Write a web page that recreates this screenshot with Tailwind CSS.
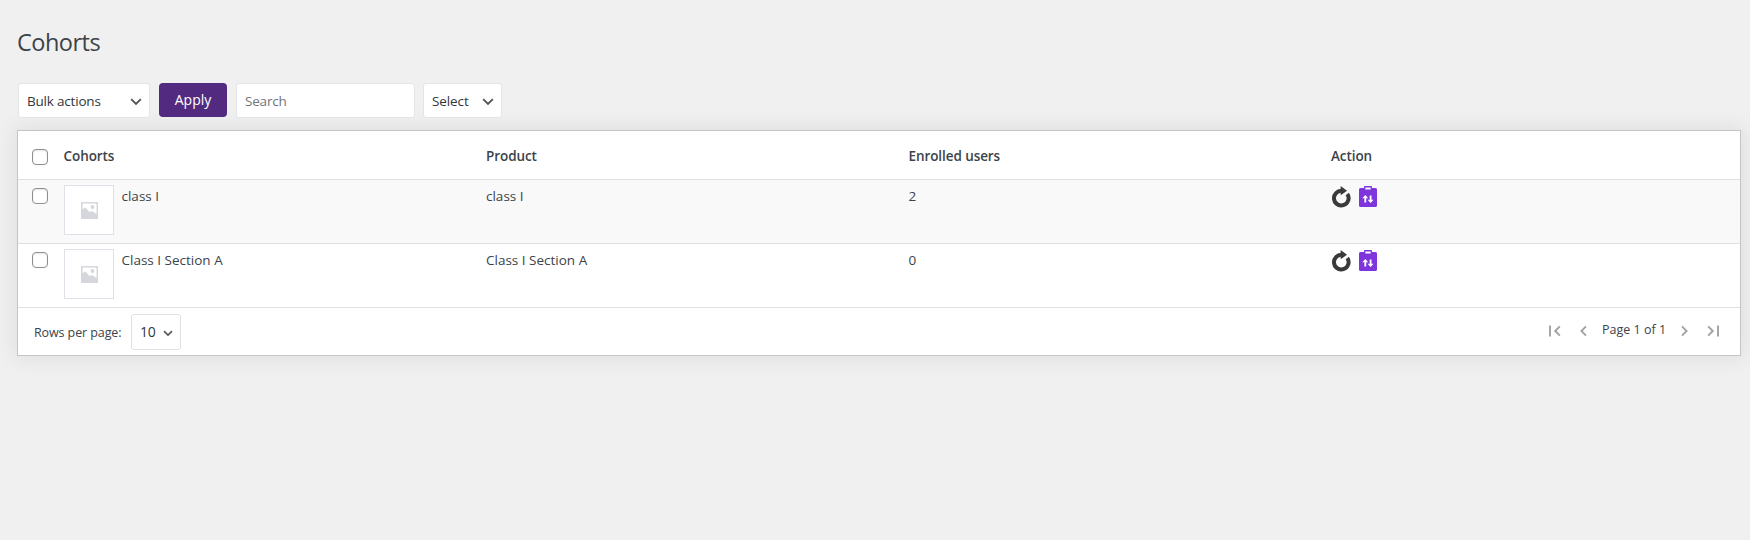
<!DOCTYPE html>
<html lang="en">
<head>
<meta charset="utf-8">
<title>Cohorts</title>
<script src="https://cdn.jsdelivr.net/npm/@tailwindcss/browser@4"></script>
</head>
<body class="bg-[#f0f0f0] h-[540px] overflow-hidden font-['Open_Sans','Noto_Sans',sans-serif] text-[13.500px] leading-5 text-[#3c434a] whitespace-nowrap">
<svg class="hidden">
  <symbol id="chev" viewBox="0 0 12 8"><path d="M1.2 1.2 6 6l4.800-4.800" fill="none" stroke="#555" stroke-width="1.900"/></symbol>
  <symbol id="pic" viewBox="0 0 17 17"><path fill="#d5d7dc" fill-rule="evenodd" d="M0 0h17v17H0zM1.500 1.500v5.800L4.300 5.500l4.200 4.500 2.500-1 4.500 3V1.500z"/><circle cx="11.500" cy="5" r="1.900" fill="#d5d7dc"/></symbol>
  <symbol id="sync" viewBox="0 0 20 22"><path d="M11 4.900A7.300 7.300 0 1 0 16.300 8" fill="none" stroke="#3a3a3a" stroke-width="4"/><path d="M9.700 0 16 4.700l-6.300 4.600z" fill="#3a3a3a"/></symbol>
  <symbol id="clip" viewBox="0 0 18 22"><path fill="#7f35dc" fill-rule="evenodd" d="M1.500 2H5V.8Q5 0 5.800 0h6.400Q13 0 13 .8V2h3.500Q18 2 18 3.500v16q0 1.500-1.500 1.500h-15Q0 21 0 19.500v-16Q0 2 1.500 2zM6.300 1.500v2h5.400v-2z"/><path d="M6.300 16.500V10M11.600 9.500v6.500" stroke="#fff" stroke-width="1.800"/><path d="M3.400 12.200 6.300 9l2.900 3.200zM8.700 13.800l2.900 3.200 2.900-3.200z" fill="#fff"/></symbol>
</svg>
<main class="pl-[17px] pr-[9px] pt-[25px]">
  <h1 class="h-[34px] leading-[34px] text-[23.500px]"><span class="tracking-[-0.5px]">Cohorts</span></h1>
  <div class="mt-6 ml-px flex items-start h-[35px]">
    <div class="w-[132px] h-[35px] bg-white border border-[#e2e4e7] rounded-[3px] flex items-center justify-between pl-2 pr-[7px] text-[#32373c]"><span class="tracking-[-0.2px]">Bulk actions</span><svg class="w-3 h-2 mt-0.5"><use href="#chev"/></svg></div>
    <div class="ml-[9px] w-[68px] h-[34px] bg-[#522b80] rounded text-white text-center leading-[34px] text-[14px]"><span>Apply</span></div>
    <div class="ml-[9px] w-[179px] h-[35px] bg-white border border-[#e2e4e7] rounded-[3px] flex items-center pl-2 text-[#70757a]"><span class="tracking-[-0.2px]">Search</span></div>
    <div class="ml-2 w-[79px] h-[35px] bg-white border border-[#e2e4e7] rounded-[3px] flex items-center justify-between pl-2 pr-[7px] text-[#32373c]"><span class="tracking-[-0.1px]">Select</span><svg class="w-3 h-2 mt-0.5"><use href="#chev"/></svg></div>
  </div>
  <section class="mt-3 h-[226px] bg-white border border-[#c3c4c7] shadow-[0_0_20px_3px_rgba(0,0,0,0.07)]">
    <div class="h-[49px] border-b border-[#dfe0e4] flex pl-[14px] pt-[15px] font-semibold tracking-[-0.08px]">
      <i class="w-4 h-4 mt-[3px] border border-[#8c8f94] rounded bg-white shadow-[inset_0_1px_2px_rgba(0,0,0,0.1)] mr-[15.500px]"></i>
      <span class="w-[422.500px]"><b class="font-semibold">Cohorts</b></span><span class="w-[422.500px]"><b class="font-semibold">Product</b></span><span class="w-[422.500px]"><b class="font-semibold">Enrolled users</b></span><span><b class="font-semibold">Action</b></span>
    </div>
    <div class="h-16 border-b border-[#dfe0e4] bg-[#f9f9f9] flex pl-[14px] pt-[5px]">
      <i class="w-4 h-4 mt-[3px] border border-[#8c8f94] rounded bg-white shadow-[inset_0_1px_2px_rgba(0,0,0,0.1)] mr-[15.500px]"></i>
      <div class="w-[422.500px] flex pl-[0.500px]"><div class="w-[50px] h-[50px] bg-white border border-[#dfe1e8] flex items-center justify-center"><svg class="w-[17px] h-[17px]"><use href="#pic"/></svg></div><span class="ml-[7.500px] mt-px">class I</span></div>
      <div class="w-[422.500px] mt-px"><span>class I</span></div><div class="w-[422.500px] mt-px">2</div>
      <div class="flex"><svg class="w-5 h-[22px] mt-px"><use href="#sync"/></svg><svg class="w-[18px] h-[22px] ml-[7.500px] mt-px"><use href="#clip"/></svg></div>
    </div>
    <div class="h-16 border-b border-[#dfe0e4] flex pl-[14px] pt-[5px]">
      <i class="w-4 h-4 mt-[3px] border border-[#8c8f94] rounded bg-white shadow-[inset_0_1px_2px_rgba(0,0,0,0.1)] mr-[15.500px]"></i>
      <div class="w-[422.500px] flex pl-[0.500px]"><div class="w-[50px] h-[50px] bg-white border border-[#dfe1e8] flex items-center justify-center"><svg class="w-[17px] h-[17px]"><use href="#pic"/></svg></div><span class="ml-[7.500px] mt-px">Class I Section A</span></div>
      <div class="w-[422.500px] mt-px"><span>Class I Section A</span></div><div class="w-[422.500px] mt-px">0</div>
      <div class="flex"><svg class="w-5 h-[22px] mt-px"><use href="#sync"/></svg><svg class="w-[18px] h-[22px] ml-[7.500px] mt-px"><use href="#clip"/></svg></div>
    </div>
    <div class="h-[47px] flex items-start pl-4 pr-[21px]">
      <span class="mt-[15px] w-[97px] text-[12.500px]"><b class="font-normal tracking-[-0.1px]">Rows per page:</b></span>
      <div class="mt-1.5 w-[50px] h-9 border border-[#dfe1e6] rounded-[3px] flex items-center justify-between pl-2 pr-[7px] text-[14px] text-[#32373c]"><span class="tracking-[-0.3px]">10</span><svg class="w-2.5 h-[7px] mt-0.5" viewBox="0 0 12 8"><use href="#chev"/></svg></div>
      <div class="ml-auto flex items-start text-[12.500px]">
        <svg class="w-3 h-3 mt-[17px]" fill="none" stroke="#a0a2a6" stroke-width="1.900"><path d="M1 .5v11M10.800 1.300 6.200 6l4.600 4.700"/></svg>
        <svg class="w-[7px] h-3 ml-[19px] mt-[17px]" fill="none" stroke="#a0a2a6" stroke-width="1.900"><path d="M6 1.300 1.400 6 6 10.700"/></svg>
        <span class="ml-[15px] mt-3 w-[65px]"><b class="font-normal">Page 1 of 1</b></span>
        <svg class="w-[7px] h-3 ml-[14px] mt-[17px]" fill="none" stroke="#a0a2a6" stroke-width="1.900"><path d="M1 1.300 5.600 6 1 10.700"/></svg>
        <svg class="w-3 h-3 ml-[19px] mt-[17px]" fill="none" stroke="#a0a2a6" stroke-width="1.900"><path d="M1.200 1.300 5.800 6l-4.600 4.700M11 .5v11"/></svg>
      </div>
    </div>
  </section>
</main>
</body>
</html>
